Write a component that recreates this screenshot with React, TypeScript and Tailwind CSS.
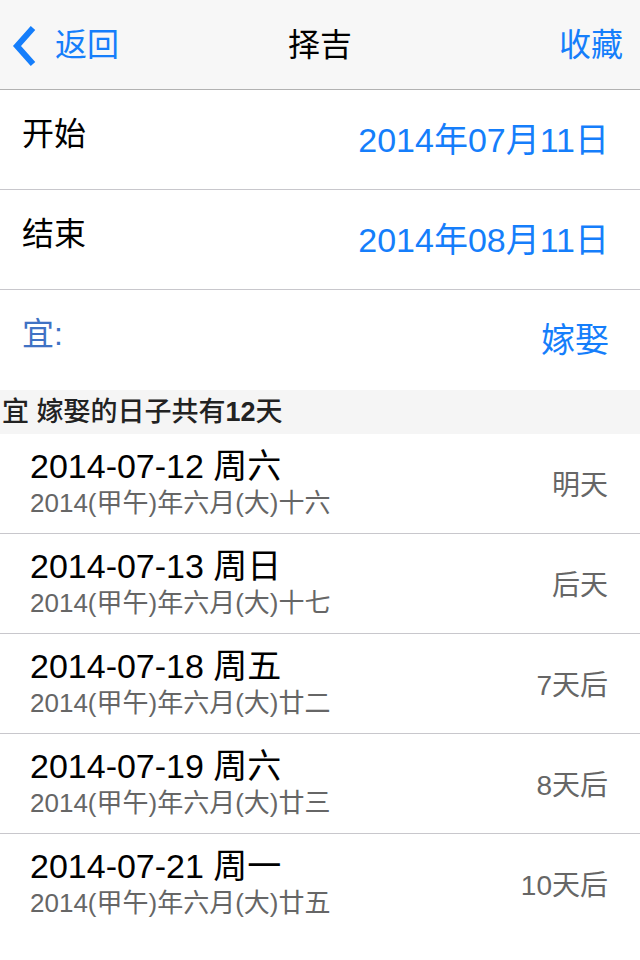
import React from "react";

const font = { fontFamily: '"Liberation Sans", "Noto Sans CJK SC", sans-serif' };

const days = [
  { date: "2014-07-12 周六", lunar: "2014(甲午)年六月(大)十六", rel: "明天" },
  { date: "2014-07-13 周日", lunar: "2014(甲午)年六月(大)十七", rel: "后天" },
  { date: "2014-07-18 周五", lunar: "2014(甲午)年六月(大)廿二", rel: "7天后" },
  { date: "2014-07-19 周六", lunar: "2014(甲午)年六月(大)廿三", rel: "8天后" },
  { date: "2014-07-21 周一", lunar: "2014(甲午)年六月(大)廿五", rel: "10天后" },
];

const App = () => {
  return (
    <div className="w-[640px] h-[960px] bg-white overflow-hidden" style={font}>
      {/* NAV BAR */}
      <div className="h-[90px] bg-[#f7f7f7] border-b border-[#b2b2b2] flex items-center relative">
        <div className="flex items-center pl-[12px] text-[#157efb]">
          <svg width="24" height="42" viewBox="0 0 24 42" className="mt-[2px]">
            <path d="M21 3 L5 21 L21 39" fill="none" stroke="#157efb" strokeWidth="6" />
          </svg>
          <span className="ml-[19px] text-[32px] leading-none">返回</span>
        </div>
        <div className="absolute left-0 right-0 text-center text-[32px] leading-none text-black pointer-events-none">
          择吉
        </div>
        <div className="ml-auto pr-[17px] text-[32px] leading-none text-[#157efb]">收藏</div>
      </div>

      {/* DATE RANGE */}
      <div className="h-[100px] border-b border-[#c8c7cc] flex items-center justify-between pl-[22px] pr-[31px]">
        <span className="text-[32px] leading-none text-black -mt-[12px]">开始</span>
        <span className="text-[34px] leading-none text-[#157efb]">2014年07月11日</span>
      </div>
      <div className="h-[100px] border-b border-[#c8c7cc] flex items-center justify-between pl-[22px] pr-[31px]">
        <span className="text-[32px] leading-none text-black -mt-[12px]">结束</span>
        <span className="text-[34px] leading-none text-[#157efb]">2014年08月11日</span>
      </div>
      <div className="h-[100px] flex items-center justify-between pl-[22px] pr-[31px]">
        <span className="text-[32px] leading-none text-[#3f72c4] -mt-[12px]">宜:</span>
        <span className="text-[34px] leading-none text-[#157efb]">嫁娶</span>
      </div>

      {/* SECTION HEADER */}
      <div className="h-[44px] bg-[#f5f5f5] flex items-center pl-[2px] text-[27px] leading-none font-medium text-[#222]">
        宜 嫁娶的日子共有<span className="font-bold">12</span>天
      </div>

      {/* LIST */}
      {days.map((d, i) => (
        <div
          key={d.date}
          className={`h-[100px] flex items-center justify-between pl-[30px] pr-[32px] ${
            i < days.length - 1 ? "border-b border-[#c8c7cc]" : ""
          }`}
        >
          <div className="flex flex-col -mt-[2px]">
            <span className="text-[34px] leading-[40px] text-black">{d.date}</span>
            <span className="text-[26px] leading-[34px] text-[#666]">{d.lunar}</span>
          </div>
          <span className="text-[28px] leading-none text-[#666] mt-[4px]">{d.rel}</span>
        </div>
      ))}
    </div>
  );
};

export default App;
